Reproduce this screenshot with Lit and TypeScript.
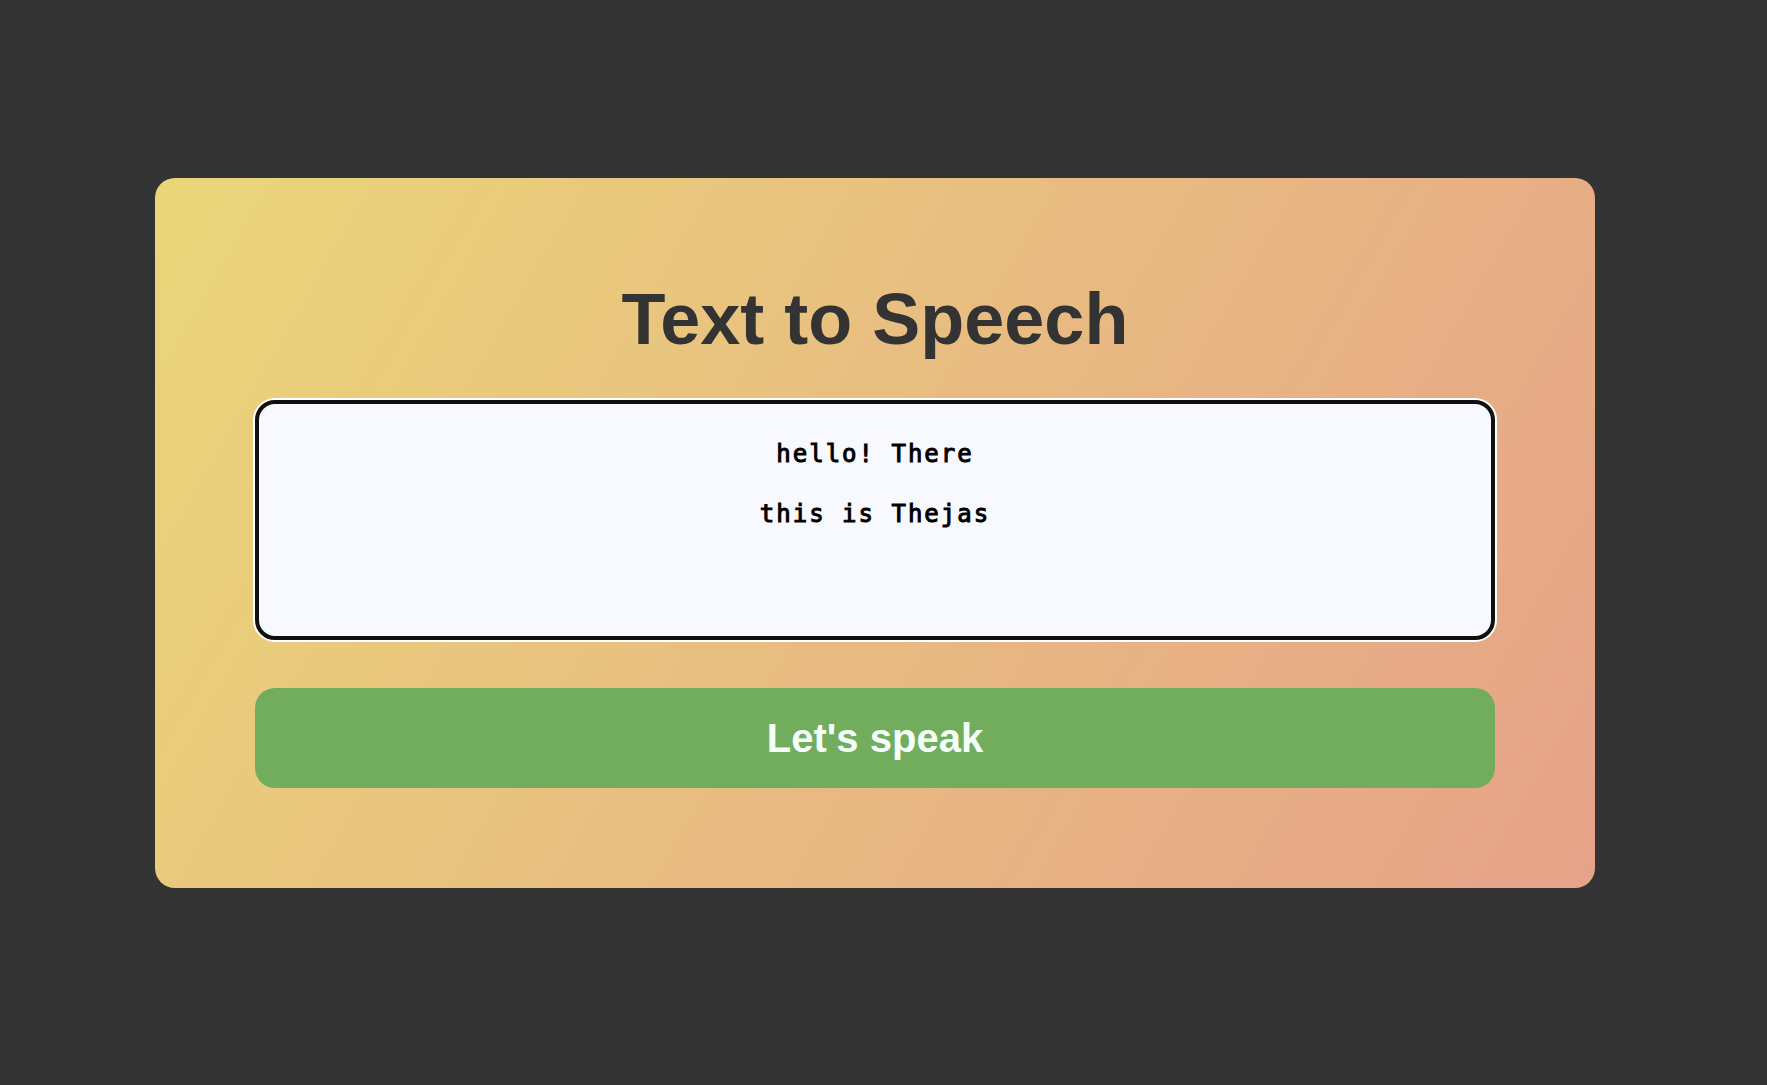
import { LitElement, html, css } from "lit";
import { customElement, state } from "lit/decorators.js";

@customElement("app-root")
export class AppRoot extends LitElement {
  static styles = css`
    :host {
      display: block;
      font-family: Arial, "Liberation Sans", sans-serif;
    }
    .page {
      box-sizing: border-box;
      min-height: 100vh;
      display: flex;
      align-items: center;
      justify-content: center;
      padding: 20px 172px 39px 155px;
      background: #333333;
    }
    .card {
      box-sizing: border-box;
      flex: 1;
      display: flex;
      flex-direction: column;
      padding: 100px;
      border-radius: 20px;
      background: linear-gradient(120deg, #ead679, #e6a289);
    }
    .title {
      margin: 0 0 40px;
      font-size: 72px;
      line-height: 82px;
      font-weight: 700;
      text-align: center;
      color: #333333;
    }
    .text {
      box-sizing: border-box;
      width: 100%;
      height: 240px;
      margin: 0 0 48px;
      padding: 20px;
      border: 4px solid #101010;
      border-radius: 20px;
      outline: none;
      box-shadow: 0 0 0 2px #ffffff;
      resize: none;
      background: #f8f8ff;
      color: #000000;
      font-family: "DejaVu Sans Mono", monospace;
      font-size: 24px;
      font-weight: 400;
      -webkit-text-stroke: 1px #000000;
      line-height: 60px;
      letter-spacing: 2px;
      text-align: center;
    }
    .speak {
      height: 100px;
      padding: 0 20px;
      border: 0;
      border-radius: 20px;
      background: #72ad5e;
      color: #f5fffa;
      font-family: inherit;
      font-size: 40px;
      font-weight: 700;
      cursor: pointer;
    }
  `;

  @state() private message = "hello! There\nthis is Thejas";

  private onInput(event: Event) {
    this.message = (event.target as HTMLTextAreaElement).value;
  }

  private speak() {
    window.speechSynthesis?.speak(new SpeechSynthesisUtterance(this.message));
  }

  render() {
    return html`
      <main class="page">
        <section class="card">
          <h1 class="title" id="title">Text to Speech</h1>
          <textarea
            class="text"
            aria-labelledby="title"
            spellcheck="false"
            .value=${this.message}
            @input=${this.onInput}
          ></textarea>
          <button class="speak" type="button" @click=${this.speak}>Let's speak</button>
        </section>
      </main>
    `;
  }
}
